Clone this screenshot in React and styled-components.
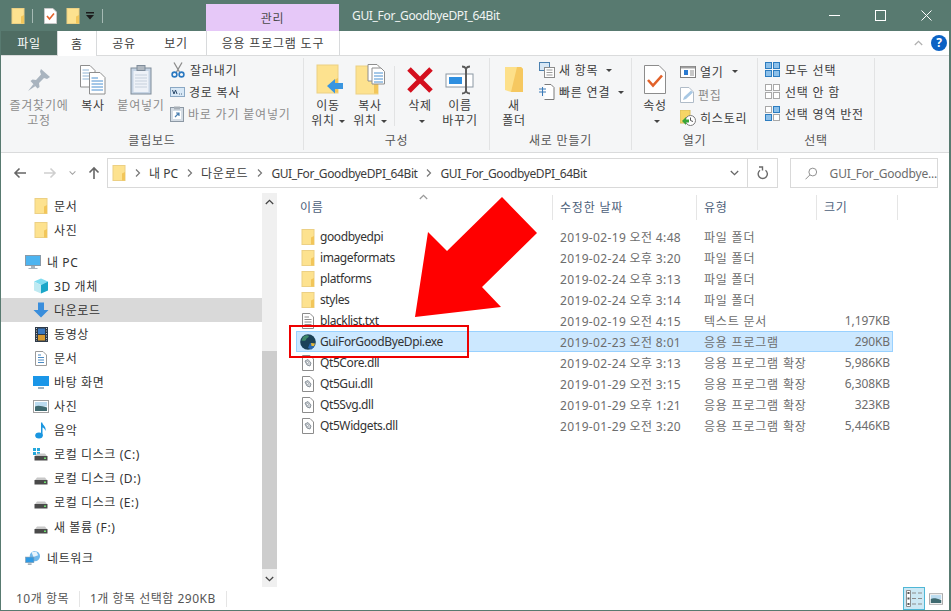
import React from 'react';
import styled, { createGlobalStyle } from 'styled-components';

const GlobalStyle = createGlobalStyle`
  html, body {
    margin: 0;
    padding: 0;
    background: #ffffff;
  }
  * {
    box-sizing: border-box;
  }
`;

const Frame = styled.div`
  position: relative;
  width: 951px;
  height: 611px;
  display: flex;
  flex-direction: column;
  overflow: hidden;
  background: #ffffff;
  border-style: solid;
  border-color: #587a70;
  border-width: 0 2px 1px 1px;
  font-family: 'Noto Sans', 'Noto Sans CJK KR', sans-serif;
  font-size: 12px;
  letter-spacing: 0.8px;
  color: #333333;
`;

const TitleBar = styled.div`
  height: 31px;
  flex: none;
  display: flex;
  background: #587a70;
`;

const QuickAccess = styled.div`
  width: 205px;
  display: flex;
  align-items: center;
  padding: 0 0 0 9px;
`;

const QuickIcon = styled.span`
  width: 16px;
  height: 18px;
  display: flex;
  align-items: center;
  justify-content: center;
  margin-right: ${p => p.$gap || 0}px;
`;

const QuickSeparator = styled.span`
  width: 1px;
  height: 14px;
  background: #a6bab4;
  margin-right: ${p => p.$gap}px;
`;

const ContextTab = styled.div`
  width: 133px;
  margin-top: 4px;
  background: #e6c8f8;
  color: #4a4a4a;
  display: flex;
  align-items: center;
  justify-content: center;
  padding-top: 1px;
`;

const WindowTitle = styled.div`
  flex: 1;
  padding-left: 13px;
  line-height: 31px;
  color: #f0f4f3;
  letter-spacing: -0.33px;
`;

const WindowButton = styled.div`
  width: 46px;
  display: flex;
  align-items: center;
  justify-content: center;
`;

const TabRow = styled.div`
  height: 24px;
  flex: none;
  display: flex;
  align-items: stretch;
  background: #ffffff;
`;

const FileTab = styled.div`
  width: 56px;
  background: #4f6d63;
  color: #ffffff;
  display: flex;
  align-items: center;
  justify-content: center;
`;

const Tab = styled.div`
  width: ${p => p.$w}px;
  display: flex;
  align-items: center;
  justify-content: center;
  color: #3c3c3c;
  background: #ffffff;
  height: ${p => (p.$active ? '25px' : 'auto')};
  position: relative;
  z-index: 1;
  border-style: solid;
  border-color: #d8dadc;
  border-width: 0 ${p => (p.$edged ? 1 : 0)}px 0 ${p => (p.$edged ? 1 : 0)}px;
  margin-left: ${p => p.$gap || 0}px;
`;

const TabSpacer = styled.div`
  flex: 1;
`;

const RibbonToggle = styled.div`
  width: 24px;
  display: flex;
  align-items: center;
  justify-content: center;
`;

const HelpBadge = styled.div`
  width: 16px;
  height: 16px;
  border-radius: 50%;
  margin: 4px 2px 0 1px;
  background: #0b62c4;
  color: #ffffff;
  font-weight: 700;
  font-size: 12px;
  letter-spacing: 0;
  line-height: 16px;
  text-align: center;
`;

const Ribbon = styled.div`
  height: 98px;
  flex: none;
  display: flex;
  padding-top: 2px;
  background: #f5f6f7;
  border-top: 1px solid #dadbdc;
  border-bottom: 1px solid #dadbdc;
`;

const Group = styled.div`
  width: ${p => p.$w}px;
  height: 92px;
  flex: none;
  display: flex;
  flex-direction: column;
  border-right: 1px solid #e2e3e4;
`;

const GroupBody = styled.div`
  height: 74px;
  display: flex;
  padding-left: ${p => p.$pad}px;
`;

const GroupCaption = styled.div`
  height: 18px;
  line-height: 17px;
  text-align: center;
  color: #555555;
`;

const BigButton = styled.div`
  width: ${p => p.$w}px;
  flex: none;
  display: flex;
  flex-direction: column;
  align-items: center;
  padding-top: 4px;
  color: ${p => (p.$off ? '#8c8c8c' : '#3c3c3c')};
  white-space: nowrap;
`;

const BigLabel = styled.div`
  line-height: 15px;
  text-align: center;
`;

const BigIcon = styled.div`
  height: 36px;
  display: flex;
  align-items: center;
  justify-content: center;
`;

const Caret = styled.span`
  display: inline-block;
  width: 0;
  height: 0;
  margin-left: 4px;
  vertical-align: 2px;
  border-left: 3px solid transparent;
  border-right: 3px solid transparent;
  border-top: 3px solid #444444;
`;

const RibbonDivider = styled.div`
  width: 1px;
  height: 60px;
  margin: 8px 3px 0 3px;
  background: #e2e3e4;
`;

const SmallStack = styled.div`
  margin-left: ${p => p.$gap || 0}px;
  padding-top: ${p => p.$top || 1}px;
  display: flex;
  flex-direction: column;
`;

const SmallRow = styled.div`
  height: ${p => p.$h || 22}px;
  display: flex;
  align-items: center;
  gap: 4px;
  white-space: nowrap;
  color: ${p => (p.$off ? '#8c8c8c' : '#3c3c3c')};
`;

const AddressRow = styled.div`
  height: 40px;
  flex: none;
  display: flex;
  align-items: center;
`;

const NavButtons = styled.div`
  width: 106px;
  display: flex;
  align-items: center;
`;

const NavButton = styled.span`
  width: ${p => p.$w}px;
  display: flex;
  justify-content: center;
`;

const AddressBox = styled.div`
  width: 671px;
  height: 30px;
  display: flex;
  align-items: center;
  border: 1px solid #d9d9d9;
  background: #ffffff;
  padding-left: 4px;
`;

const Crumb = styled.span`
  color: #3c3c3c;
  white-space: nowrap;
  letter-spacing: ${p => p.$spacing}px;
`;

const CrumbArrow = styled.span`
  width: ${p => p.$w}px;
  display: flex;
  justify-content: center;
`;

const AddressEnd = styled.div`
  margin-left: auto;
  display: flex;
  align-items: center;
  height: 100%;
`;

const RefreshButton = styled.div`
  width: 30px;
  height: 100%;
  margin-left: 8px;
  display: flex;
  align-items: center;
  justify-content: center;
  border-left: 1px solid #d9d9d9;
`;

const SearchBox = styled.div`
  width: 148px;
  height: 30px;
  margin-left: 12px;
  display: flex;
  align-items: center;
  gap: 12px;
  padding-left: 14px;
  border: 1px solid #d9d9d9;
  color: #6d6d6d;
  white-space: nowrap;
  letter-spacing: -0.2px;
`;

const Main = styled.div`
  flex: 1;
  min-height: 0;
  display: flex;
`;

const Sidebar = styled.div`
  width: 261px;
  flex: none;
  padding-top: 1px;
  letter-spacing: 0.6px;
`;

const NavRow = styled.div`
  height: 24px;
  display: flex;
  align-items: center;
  gap: ${p => (p.$root ? 6 : 5)}px;
  padding-left: ${p => (p.$root ? 24 : 32)}px;
  margin-top: ${p => p.$gap || 0}px;
  background: ${p => (p.$active ? '#d9d9d9' : 'transparent')};
  color: #333333;
`;

const NavIcon = styled.span`
  width: 16px;
  height: 16px;
  flex: none;
  display: flex;
  align-items: center;
  justify-content: center;
`;

const ScrollBar = styled.div`
  width: 15px;
  flex: none;
  display: flex;
  flex-direction: column;
  background: #f0f0f0;
`;

const ScrollArrow = styled.div`
  height: 17px;
  flex: none;
  display: flex;
  align-items: center;
  justify-content: center;
`;

const ScrollTrack = styled.div`
  flex: 1;
`;

const ScrollThumb = styled.div`
  height: 218px;
  margin-top: 141px;
  background: #cdcdcd;
`;

const FileList = styled.div`
  flex: 1;
  min-width: 0;
  padding-left: 19px;
`;

const HeaderRow = styled.div`
  width: 602px;
  height: 27px;
  margin-bottom: 6px;
  display: grid;
  grid-template-columns: 257px 144px 120px 81px;
`;

const HeaderCell = styled.div`
  position: relative;
  padding-left: ${p => p.$pad}px;
  line-height: 25px;
  color: #4c607a;
  border-right: 1px solid #e5e5e5;
  margin-top: 2px;
`;

const SortCaret = styled.span`
  position: absolute;
  top: -1px;
  left: 123px;
  line-height: 0;
`;

const FileRow = styled.div`
  width: 597px;
  height: 21px;
  display: grid;
  grid-template-columns: 257px 144px 120px 76px;
  align-items: center;
  background: ${p => (p.$selected ? '#cce8ff' : 'transparent')};
  box-shadow: ${p => (p.$selected ? 'inset 0 0 0 1px #99d1ff' : 'none')};
`;

const NameCell = styled.div`
  display: flex;
  align-items: center;
  gap: 4px;
  padding-left: 4px;
  color: #333333;
  white-space: nowrap;
  letter-spacing: -0.4px;
`;

const InfoCell = styled.div`
  padding-left: 7px;
  color: #6d6d6d;
  white-space: nowrap;
  letter-spacing: ${p => p.$spacing}px;
`;

const SizeCell = styled.div`
  padding-right: 3px;
  text-align: right;
  color: #6d6d6d;
  letter-spacing: -0.1px;
`;

const StatusBar = styled.div`
  height: 23px;
  flex: none;
  display: flex;
  align-items: center;
  color: #555555;
  letter-spacing: 0.5px;
`;

const StatusText = styled.span`
  width: ${p => p.$w}px;
  padding-left: ${p => p.$left}px;
  border-right: 1px solid #e5e5e5;
  line-height: 16px;
  white-space: nowrap;
`;

const ViewButtons = styled.div`
  margin-left: auto;
  height: 100%;
  display: flex;
  align-items: center;
  padding-right: 6px;
`;

const ViewButton = styled.div`
  width: ${p => p.$w}px;
  height: 23px;
  display: flex;
  align-items: center;
  justify-content: center;
  background: ${p => (p.$on ? '#cce8f4' : 'transparent')};
  border: ${p => (p.$on ? '1px solid #4fb7d6' : 'none')};
  margin-right: ${p => p.$gap || 0}px;
`;

const RedBox = styled.div`
  position: absolute;
  left: 288px;
  top: 325px;
  width: 180px;
  height: 33px;
  border: 2px solid #ee0000;
  pointer-events: none;
`;

const RedArrow = styled.svg`
  position: absolute;
  left: 413px;
  top: 196px;
  pointer-events: none;
`;

const FolderIcon = ({ w = 14, h = 16 }) => (
  <svg width={w} height={h} viewBox="0 0 14 16">
    <rect x="1" y="0.5" width="12" height="15" fill="#fde28f" stroke="#ecd084" />
    <path d="M10 15.5V8.5L13 7V15.5Z" fill="#f2c65a" />
  </svg>
);

const ChevronRight = ({ color = '#777777' }) => (
  <svg width="6" height="8" viewBox="0 0 6 8">
    <path d="M1 0.5L4.5 4L1 7.5" fill="none" stroke={color} strokeWidth="1.2" />
  </svg>
);

const ChevronDown = ({ color = '#666666', w = 9 }) => (
  <svg width={w} height="6" viewBox="0 0 9 6">
    <path d="M0.8 1L4.5 4.6L8.2 1" fill="none" stroke={color} strokeWidth="1.3" />
  </svg>
);

const ChevronUp = ({ color = '#555555', w = 9 }) => (
  <svg width={w} height="6" viewBox="0 0 9 6">
    <path d="M0.8 5L4.5 1.4L8.2 5" fill="none" stroke={color} strokeWidth="1.3" />
  </svg>
);

const ArrowNav = ({ dir, color }) => {
  const paths = {
    left: 'M13 7H2M6.5 2.5L2 7L6.5 11.5',
    right: 'M1 7H12M7.5 2.5L12 7L7.5 11.5',
    up: 'M7 13V2M2.5 6.5L7 2L11.5 6.5'
  };
  return (
    <svg width="14" height="14" viewBox="0 0 14 14">
      <path d={paths[dir]} fill="none" stroke={color} strokeWidth="1.6" />
    </svg>
  );
};

const CheckDocIcon = () => (
  <svg width="13" height="16" viewBox="0 0 13 16">
    <path d="M0.5 0.5H9L12.5 4V15.5H0.5Z" fill="#ffffff" stroke="#c8c8c8" />
    <path d="M3 8L5.5 11L10 5.5" fill="none" stroke="#e2622a" strokeWidth="1.6" />
  </svg>
);

const PinIcon = () => (
  <svg width="26" height="26" viewBox="0 0 26 26">
    <path d="M15 2L24 10L21 12L18 11L13 16L13.5 20L11.5 21.5L4.5 14L6.5 12.5L10 13L15 7.5L14 4.5Z" fill="#a9b4bf" />
    <path d="M7.5 17L2 24L9.5 19Z" fill="#a9b4bf" />
  </svg>
);

const CopyDocsIcon = () => (
  <svg width="26" height="30" viewBox="0 0 26 30">
    <path d="M0.5 0.5H10L15 5.5V22H0.5Z" fill="#ffffff" stroke="#8e8e8e" />
    <path d="M2.5 5H9M2.5 8H12M2.5 11H12M2.5 14H12" stroke="#8fb4d6" />
    <path d="M9.5 7.5H20L25 12.5V29H9.5Z" fill="#ffffff" stroke="#8e8e8e" />
    <path d="M11.5 13H18M11.5 16H23M11.5 19H23M11.5 22H23M11.5 25H23" stroke="#4a90d0" />
  </svg>
);

const ClipboardIcon = () => (
  <svg width="22" height="30" viewBox="0 0 22 30">
    <rect x="1" y="3" width="20" height="26" fill="#c6d4e4" stroke="#7f8c9a" />
    <rect x="3.5" y="6" width="15" height="21" fill="#eef2f8" />
    <path d="M5 10H17M5 13H17M5 16H17M5 19H17M5 22H17" stroke="#c6d0dc" />
    <rect x="7" y="0.5" width="8" height="5" fill="#b0b8c0" stroke="#7f8c9a" />
  </svg>
);

const ScissorsIcon = () => (
  <svg width="16" height="16" viewBox="0 0 16 16">
    <path d="M4 0.5L9.5 10M12 0.5L6.5 10" stroke="#8c8c8c" strokeWidth="1.3" />
    <circle cx="4.5" cy="12.5" r="2.4" fill="none" stroke="#2a78c0" strokeWidth="1.6" />
    <circle cx="11.5" cy="12.5" r="2.4" fill="none" stroke="#2a78c0" strokeWidth="1.6" />
  </svg>
);

const PathCopyIcon = () => (
  <svg width="15" height="10" viewBox="0 0 15 10">
    <rect x="0.5" y="0.5" width="14" height="9" fill="#d8e8f6" stroke="#8aa8c4" />
    <path d="M2.5 3L4 7L5.5 3L7 7M9 7H9.8M11 7H11.8" fill="none" stroke="#2c4a6a" />
  </svg>
);

const ShortcutPasteIcon = () => (
  <svg width="14" height="16" viewBox="0 0 14 16">
    <rect x="0.5" y="1.5" width="13" height="14" fill="#d4dce4" stroke="#8c98a4" />
    <rect x="4" y="0.5" width="6" height="3" fill="#a6aeb6" />
    <rect x="3" y="5" width="8" height="8" fill="#ffffff" />
    <path d="M5 11L8.5 7.5M6 7H9V10" fill="none" stroke="#4a7fb0" strokeWidth="1.2" />
  </svg>
);

const MoveToIcon = () => (
  <svg width="30" height="32" viewBox="0 0 30 32">
    <rect x="4" y="1" width="21" height="28" fill="#fde28f" stroke="#ecd084" />
    <path d="M21 28.5V16L25 14V28.5Z" fill="#f2c65a" />
    <path d="M14 22L22 15V19H30V25H22V29.5Z" fill="#3a96e0" />
  </svg>
);

const CopyToIcon = () => (
  <svg width="32" height="32" viewBox="0 0 32 32">
    <rect x="2" y="2" width="22" height="28" fill="#fde28f" stroke="#ecd084" />
    <path d="M20 29.5V16L24 14V29.5Z" fill="#f2c65a" />
    <path d="M14 0.5H23L27 4.5V17H14Z" fill="#ffffff" stroke="#8e8e8e" />
    <path d="M18 4H27L30.5 7.5V20H18Z" fill="#ffffff" stroke="#8e8e8e" />
    <path d="M20 9H29M20 12H29M20 15H29M20 18H29" stroke="#4a90d0" />
  </svg>
);

const DeleteIcon = () => (
  <svg width="26" height="26" viewBox="0 0 26 26">
    <path d="M2 2L24 24M24 2L2 24" stroke="#d40f1e" strokeWidth="5" />
  </svg>
);

const RenameIcon = () => (
  <svg width="30" height="30" viewBox="0 0 30 30">
    <rect x="1" y="9" width="27" height="13" fill="#ffffff" stroke="#8c98a4" />
    <rect x="4" y="12" width="13" height="7" fill="#2e8fe0" />
    <path d="M17 1.5C19 1.5 20 2 21 3.5C22 2 23 1.5 25 1.5M17 28.5C19 28.5 20 28 21 26.5C22 28 23 28.5 25 28.5M21 3V27" fill="none" stroke="#5c5c5c" strokeWidth="2" />
  </svg>
);

const NewFolderIcon = () => (
  <svg width="20" height="28" viewBox="0 0 20 28">
    <path d="M1 1H17L19 3V26H7L1 24Z" fill="#fde08a" />
    <path d="M13 1H17L19 3V26H7Z" fill="#f6c860" />
  </svg>
);

const NewItemIcon = () => (
  <svg width="16" height="16" viewBox="0 0 16 16">
    <rect x="0.5" y="0.5" width="10" height="8" fill="#d8e8f6" stroke="#4a80b0" />
    <rect x="5.5" y="5.5" width="10" height="10" fill="#ffffff" stroke="#8c8c8c" />
    <path d="M7.5 8H13.5M7.5 10.5H13.5M7.5 13H13.5" stroke="#9a9a9a" />
  </svg>
);

const EasyAccessIcon = () => (
  <svg width="16" height="16" viewBox="0 0 16 16">
    <path d="M5.5 0.5H12L15 3.5V15.5H5.5" fill="#ffffff" stroke="#7a7a7a" />
    <path d="M0 5H7M0 8H7M3.5 3V12" stroke="#3a7ab8" strokeWidth="1" />
  </svg>
);

const PropertiesIcon = () => (
  <svg width="22" height="30" viewBox="0 0 22 30">
    <path d="M0.5 0.5H15L21.5 7V28.5H0.5Z" fill="#ffffff" stroke="#8c8c8c" />
    <path d="M4 15L9 20.5L18 10.5" fill="none" stroke="#e2622a" strokeWidth="2.6" />
  </svg>
);

const OpenIcon = () => (
  <svg width="16" height="12" viewBox="0 0 16 12">
    <rect x="0.5" y="0.5" width="15" height="11" fill="#ffffff" stroke="#808080" />
    <path d="M1 1.5H15" stroke="#a0a0a0" strokeWidth="2" />
    <rect x="4" y="4" width="4" height="5" fill="#2a7ad0" />
    <path d="M10 5H14M10 7H14M10 9H14" stroke="#909090" />
  </svg>
);

const EditIcon = () => (
  <svg width="14" height="16" viewBox="0 0 14 16">
    <path d="M0.5 0.5H9L13.5 5V15.5H0.5Z" fill="#ffffff" stroke="#b0bcc8" />
    <path d="M3 13L4 10L11 3.5L13 5.5L6 12Z" fill="#a8c8e4" />
  </svg>
);

const HistoryIcon = () => (
  <svg width="16" height="16" viewBox="0 0 16 16">
    <rect x="0" y="0" width="10" height="13" fill="#f6d565" stroke="#d8bc5a" />
    <circle cx="10.5" cy="10.5" r="5" fill="#ffffff" stroke="#7a7a7a" />
    <path d="M10.5 7.5V10.5L13 11.5" fill="none" stroke="#555555" />
    <path d="M2 11L6 7V9.5H9V12.5H6V15Z" fill="#3aa43a" />
  </svg>
);

const SelectGridIcon = ({ cells }) => (
  <svg width="16" height="16" viewBox="0 0 16 16">
    {cells.map(([x, y, on]) => (
      <rect
        key={`${x}-${y}`}
        x={x + 0.5}
        y={y + 0.5}
        width="6"
        height="6"
        fill={on ? '#8cc0ea' : '#ffffff'}
        stroke={on ? '#2d7dc0' : '#a8a8a8'}
      />
    ))}
  </svg>
);

const PcIcon = () => (
  <svg width="16" height="15" viewBox="0 0 16 15">
    <rect x="0.5" y="0.5" width="15" height="10" fill="#4db4f0" stroke="#8a9aa8" />
    <path d="M6 11V13H3.5V14H12.5V13H10V11" fill="#a8b4be" />
  </svg>
);

const CubeIcon = () => (
  <svg width="16" height="16" viewBox="0 0 16 16">
    <path d="M8 0.5L15 3.5L8 7L1 3.5Z" fill="#7fdcf0" />
    <path d="M1 3.5L8 7V15.5L1 12.5Z" fill="#bfeaf2" />
    <path d="M15 3.5L8 7V15.5L15 12.5Z" fill="#1aa6c8" />
  </svg>
);

const DownloadIcon = () => (
  <svg width="16" height="16" viewBox="0 0 16 16">
    <path d="M5 0.5H11V8H15.5L8 15.5L0.5 8H5Z" fill="#3a8edc" />
  </svg>
);

const VideoIcon = () => (
  <svg width="13" height="15" viewBox="0 0 13 15">
    <rect x="0" y="0" width="13" height="15" fill="#2e3a48" />
    <rect x="3" y="1.5" width="7" height="5.5" fill="#3a78c0" />
    <rect x="3" y="8" width="7" height="5.5" fill="#d89a30" />
    <path d="M1.5 1V14M11.5 1V14" stroke="#c8c8c8" strokeDasharray="1 1.5" />
  </svg>
);

const DocIcon = () => (
  <svg width="12" height="15" viewBox="0 0 12 15">
    <path d="M0.5 0.5H8L11.5 4V14.5H0.5Z" fill="#ffffff" stroke="#9a9a9a" />
    <path d="M3 4H6M3 6.5H9M3 9H9M3 11.5H9" stroke="#4a8ac4" />
  </svg>
);

const DesktopIcon = () => (
  <svg width="16" height="13" viewBox="0 0 16 13">
    <rect x="0" y="0" width="16" height="10" fill="#1a96e8" />
    <path d="M5 11H11V13H5Z" fill="#9ab0c0" />
  </svg>
);

const PictureIcon = ({ w = 16, h = 13 }) => (
  <svg width={w} height={h} viewBox="0 0 16 13">
    <rect x="0.5" y="0.5" width="15" height="12" fill="#ffffff" stroke="#a0a0a0" />
    <rect x="2" y="2" width="12" height="4.5" fill="#bcdcf0" />
    <path d="M2 6.5C5 5 9 6 14 7.5V11H2Z" fill="#3f6a70" />
  </svg>
);

const MusicIcon = () => (
  <svg width="12" height="17" viewBox="0 0 12 17">
    <ellipse cx="4" cy="13.5" rx="3.8" ry="3" fill="#1a96e0" />
    <path d="M6 13V0.5H7.2C7.8 3.5 11.5 4.5 10.5 9C9.8 6.5 8.5 5.8 7.5 5.5V14Z" fill="#1a96e0" />
  </svg>
);

const DriveIcon = ({ windows }) => (
  <svg width="16" height="16" viewBox="0 0 16 16">
    {windows && <path d="M0 2H3V5H0ZM4 2H7V5H4ZM0 6H3V9H0ZM4 6H7V9H4Z" fill="#25a8dc" />}
    <path d="M2 10L4 7.5H12L14 10Z" fill="#c8c8c8" />
    <rect x="1.5" y="10" width="13" height="4.5" fill="#4a4a4a" />
    <rect x="11" y="11.5" width="2" height="1.5" fill="#6ee06e" />
  </svg>
);

const NetworkIcon = () => (
  <svg width="17" height="16" viewBox="0 0 17 16">
    <circle cx="10.5" cy="6" r="5.5" fill="#6fb8ec" />
    <path d="M7 2L12 1L14 5L9 7Z" fill="#e8f4fc" />
    <rect x="0.5" y="7" width="9" height="6" fill="#2e9ae4" stroke="#8a9aa8" strokeWidth="0.6" />
    <path d="M3 14.5H7" stroke="#8a9aa8" strokeWidth="1.4" />
  </svg>
);

const TextFileIcon = () => (
  <svg width="12" height="16" viewBox="0 0 12 16">
    <path d="M0.5 0.5H8L11.5 4V15.5H0.5Z" fill="#ffffff" stroke="#8c8c8c" />
    <path d="M2.5 4H7M2.5 6.5H9.5M2.5 9H9.5M2.5 11.5H9.5" stroke="#8c8c8c" />
  </svg>
);

const DllIcon = () => (
  <svg width="12" height="16" viewBox="0 0 12 16">
    <path d="M0.5 0.5H8L11.5 4V15.5H0.5Z" fill="#ffffff" stroke="#8c8c8c" />
    <path d="M3 6L6 4.5L9 8L8 11L5 10Z" fill="#d0d4d8" stroke="#8c949c" />
    <circle cx="5.5" cy="7.5" r="1" fill="#ffffff" stroke="#8c949c" strokeWidth="0.6" />
  </svg>
);

const ExeIcon = () => (
  <svg width="16" height="16" viewBox="0 0 16 16">
    <circle cx="8" cy="8" r="7.8" fill="#1c4258" />
    <path d="M3 3C5 1 8 1 9 2C8.5 4 6 4 6 6C5 7 3 7 1.5 6.5Z" fill="#3f8a6a" />
    <path d="M8 14L10 9L15 10L14 13L11.5 15.5Z" fill="#2a68b0" />
    <path d="M11 9L15 9.5L14 12L11.5 12Z" fill="#e6b93a" />
  </svg>
);

const SearchIcon = () => (
  <svg width="13" height="13" viewBox="0 0 13 13">
    <circle cx="8" cy="5" r="4" fill="none" stroke="#8c8c8c" />
    <path d="M5 8L0.5 12.5" stroke="#8c8c8c" />
  </svg>
);

const RefreshIcon = () => (
  <svg width="12" height="14" viewBox="0 0 12 14">
    <path d="M8.5 4.2A4.6 4.6 0 1 1 3 4.2" fill="none" stroke="#6a6a6a" strokeWidth="1.4" />
    <path d="M2 1L5.5 1V4.5" fill="none" stroke="#6a6a6a" strokeWidth="1.4" />
  </svg>
);

const DetailsViewIcon = () => (
  <svg width="16" height="17" viewBox="0 0 16 17">
    <path d="M0.5 0.5H4.5V16.5H0.5Z" fill="#ffffff" stroke="#8c8c8c" />
    <path d="M1.5 3H3.5M1.5 8.5H3.5M1.5 14H3.5" stroke="#555555" strokeWidth="2" />
    <path d="M6 3H10M12 3H16M6 8.5H10M12 8.5H16M6 14H10M12 14H16" stroke="#8c8c8c" />
  </svg>
);

const SELECT_ALL = [[0, 0, 1], [8, 0, 1], [0, 8, 1], [8, 8, 1]];
const SELECT_NONE = [[0, 0, 0], [8, 0, 0], [0, 8, 0], [8, 8, 0]];
const SELECT_INVERT = [[0, 0, 0], [8, 0, 1], [0, 8, 1], [8, 8, 0]];

const navItems = [
  { label: '문서', icon: <FolderIcon /> },
  { label: '사진', icon: <FolderIcon /> },
  { label: '내 PC', icon: <PcIcon />, root: true, gap: 8 },
  { label: '3D 개체', icon: <CubeIcon /> },
  { label: '다운로드', icon: <DownloadIcon />, active: true },
  { label: '동영상', icon: <VideoIcon /> },
  { label: '문서', icon: <DocIcon /> },
  { label: '바탕 화면', icon: <DesktopIcon /> },
  { label: '사진', icon: <PictureIcon /> },
  { label: '음악', icon: <MusicIcon /> },
  { label: '로컬 디스크 (C:)', icon: <DriveIcon windows /> },
  { label: '로컬 디스크 (D:)', icon: <DriveIcon /> },
  { label: '로컬 디스크 (E:)', icon: <DriveIcon /> },
  { label: '새 볼륨 (F:)', icon: <DriveIcon />, gap: 1 },
  { label: '네트워크', icon: <NetworkIcon />, root: true, gap: 7 }
];

const files = [
  { name: 'goodbyedpi', date: '2019-02-19 오전 4:48', type: '파일 폴더', icon: <FolderIcon /> },
  { name: 'imageformats', date: '2019-02-24 오후 3:20', type: '파일 폴더', icon: <FolderIcon /> },
  { name: 'platforms', date: '2019-02-24 오후 3:13', type: '파일 폴더', icon: <FolderIcon /> },
  { name: 'styles', date: '2019-02-24 오후 3:14', type: '파일 폴더', icon: <FolderIcon /> },
  { name: 'blacklist.txt', date: '2019-02-19 오전 4:15', type: '텍스트 문서', size: '1,197KB', icon: <TextFileIcon /> },
  { name: 'GuiForGoodByeDpi.exe', date: '2019-02-23 오전 8:01', type: '응용 프로그램', size: '290KB', icon: <ExeIcon />, selected: true },
  { name: 'Qt5Core.dll', date: '2019-02-24 오후 3:13', type: '응용 프로그램 확장', size: '5,986KB', icon: <DllIcon /> },
  { name: 'Qt5Gui.dll', date: '2019-01-29 오전 3:15', type: '응용 프로그램 확장', size: '6,308KB', icon: <DllIcon /> },
  { name: 'Qt5Svg.dll', date: '2019-01-29 오후 1:21', type: '응용 프로그램 확장', size: '323KB', icon: <DllIcon /> },
  { name: 'Qt5Widgets.dll', date: '2019-01-29 오전 3:20', type: '응용 프로그램 확장', size: '5,446KB', icon: <DllIcon /> }
];

const App = () => (
  <Frame>
    <GlobalStyle />
    <TitleBar>
      <QuickAccess>
        <QuickIcon $gap={6}><FolderIcon /></QuickIcon>
        <QuickSeparator $gap={9} />
        <QuickIcon $gap={7}><CheckDocIcon /></QuickIcon>
        <QuickIcon $gap={1}><FolderIcon /></QuickIcon>
        <QuickIcon $gap={4}>
          <svg width="8" height="8" viewBox="0 0 8 8">
            <path d="M0 0H8V1.4H0ZM0 3H8L4 7.5Z" fill="#1c1c1c" />
          </svg>
        </QuickIcon>
        <QuickSeparator $gap={0} />
      </QuickAccess>
      <ContextTab>관리</ContextTab>
      <WindowTitle>GUI_For_GoodbyeDPI_64Bit</WindowTitle>
      <WindowButton>
        <svg width="11" height="11" viewBox="0 0 11 11">
          <path d="M0 5.5H11" stroke="#ffffff" />
        </svg>
      </WindowButton>
      <WindowButton>
        <svg width="11" height="11" viewBox="0 0 11 11">
          <rect x="0.5" y="0.5" width="10" height="10" fill="none" stroke="#ffffff" />
        </svg>
      </WindowButton>
      <WindowButton>
        <svg width="11" height="11" viewBox="0 0 11 11">
          <path d="M0.5 0.5L10.5 10.5M10.5 0.5L0.5 10.5" stroke="#ffffff" />
        </svg>
      </WindowButton>
    </TitleBar>

    <TabRow>
      <FileTab>파일</FileTab>
      <Tab $w={40} $active $edged>홈</Tab>
      <Tab $w={54}>공유</Tab>
      <Tab $w={50}>보기</Tab>
      <Tab $w={134} $edged $gap={5}>응용 프로그램 도구</Tab>
      <TabSpacer />
      <RibbonToggle><ChevronUp color="#b0b0b0" w={9} /></RibbonToggle>
      <HelpBadge>?</HelpBadge>
    </TabRow>

    <Ribbon>
      <Group $w={303}>
        <GroupBody $pad={7}>
          <BigButton $w={62} $off>
            <BigIcon><PinIcon /></BigIcon>
            <BigLabel>즐겨찾기에<br />고정</BigLabel>
          </BigButton>
          <BigButton $w={46}>
            <BigIcon><CopyDocsIcon /></BigIcon>
            <BigLabel>복사</BigLabel>
          </BigButton>
          <BigButton $w={50} $off>
            <BigIcon><ClipboardIcon /></BigIcon>
            <BigLabel>붙여넣기</BigLabel>
          </BigButton>
          <SmallStack $gap={4}>
            <SmallRow><ScissorsIcon />잘라내기</SmallRow>
            <SmallRow><PathCopyIcon />경로 복사</SmallRow>
            <SmallRow $off><ShortcutPasteIcon />바로 가기 붙여넣기</SmallRow>
          </SmallStack>
        </GroupBody>
        <GroupCaption>클립보드</GroupCaption>
      </Group>

      <Group $w={186}>
        <GroupBody $pad={3}>
          <BigButton $w={42}>
            <BigIcon><MoveToIcon /></BigIcon>
            <BigLabel>이동<br />위치<Caret /></BigLabel>
          </BigButton>
          <BigButton $w={42}>
            <BigIcon><CopyToIcon /></BigIcon>
            <BigLabel>복사<br />위치<Caret /></BigLabel>
          </BigButton>
          <RibbonDivider />
          <BigButton $w={44}>
            <BigIcon><DeleteIcon /></BigIcon>
            <BigLabel>삭제<br /><Caret /></BigLabel>
          </BigButton>
          <BigButton $w={36}>
            <BigIcon><RenameIcon /></BigIcon>
            <BigLabel>이름<br />바꾸기</BigLabel>
          </BigButton>
        </GroupBody>
        <GroupCaption>구성</GroupCaption>
      </Group>

      <Group $w={142}>
        <GroupBody $pad={4}>
          <BigButton $w={40}>
            <BigIcon><NewFolderIcon /></BigIcon>
            <BigLabel>새<br />폴더</BigLabel>
          </BigButton>
          <SmallStack $gap={5}>
            <SmallRow><NewItemIcon />새 항목<Caret /></SmallRow>
            <SmallRow><EasyAccessIcon />빠른 연결<Caret /></SmallRow>
          </SmallStack>
        </GroupBody>
        <GroupCaption>새로 만들기</GroupCaption>
      </Group>

      <Group $w={126}>
        <GroupBody $pad={3}>
          <BigButton $w={40}>
            <BigIcon><PropertiesIcon /></BigIcon>
            <BigLabel>속성<br /><Caret /></BigLabel>
          </BigButton>
          <SmallStack $gap={5} $top={2}>
            <SmallRow $h={23}><OpenIcon />열기<Caret /></SmallRow>
            <SmallRow $h={23} $off><EditIcon />편집</SmallRow>
            <SmallRow $h={23}><HistoryIcon />히스토리</SmallRow>
          </SmallStack>
        </GroupBody>
        <GroupCaption>열기</GroupCaption>
      </Group>

      <Group $w={117}>
        <GroupBody $pad={7}>
          <SmallStack>
            <SmallRow><SelectGridIcon cells={SELECT_ALL} />모두 선택</SmallRow>
            <SmallRow><SelectGridIcon cells={SELECT_NONE} />선택 안 함</SmallRow>
            <SmallRow><SelectGridIcon cells={SELECT_INVERT} />선택 영역 반전</SmallRow>
          </SmallStack>
        </GroupBody>
        <GroupCaption>선택</GroupCaption>
      </Group>
    </Ribbon>

    <AddressRow>
      <NavButtons>
        <NavButton $w={12} />
        <NavButton $w={14}><ArrowNav dir="left" color="#666666" /></NavButton>
        <NavButton $w={16} />
        <NavButton $w={14}><ArrowNav dir="right" color="#cfcfcf" /></NavButton>
        <NavButton $w={30}><ChevronDown color="#a0a0a0" w={7} /></NavButton>
        <NavButton $w={14}><ArrowNav dir="up" color="#666666" /></NavButton>
      </NavButtons>
      <AddressBox>
        <FolderIcon />
        <CrumbArrow $w={23}><ChevronRight /></CrumbArrow>
        <Crumb $spacing={0}>내 PC</Crumb>
        <CrumbArrow $w={23}><ChevronRight /></CrumbArrow>
        <Crumb $spacing={0.8}>다운로드</Crumb>
        <CrumbArrow $w={23}><ChevronRight /></CrumbArrow>
        <Crumb $spacing={-0.4}>GUI_For_GoodbyeDPI_64Bit</Crumb>
        <CrumbArrow $w={23}><ChevronRight /></CrumbArrow>
        <Crumb $spacing={-0.4}>GUI_For_GoodbyeDPI_64Bit</Crumb>
        <AddressEnd>
          <ChevronDown color="#666666" />
          <RefreshButton><RefreshIcon /></RefreshButton>
        </AddressEnd>
      </AddressBox>
      <SearchBox>
        <SearchIcon />
        GUI_For_Goodbye...
      </SearchBox>
    </AddressRow>

    <Main>
      <Sidebar>
        {navItems.map((item, index) => (
          <NavRow
            key={`${item.label}-${index}`}
            $root={item.root}
            $active={item.active}
            $gap={item.gap}
          >
            <NavIcon>{item.icon}</NavIcon>
            {item.label}
          </NavRow>
        ))}
      </Sidebar>
      <ScrollBar>
        <ScrollArrow><ChevronUp color="#444444" /></ScrollArrow>
        <ScrollTrack><ScrollThumb /></ScrollTrack>
        <ScrollArrow><ChevronDown color="#444444" /></ScrollArrow>
      </ScrollBar>
      <FileList>
        <HeaderRow>
          <HeaderCell $pad={4}>
            이름
            <SortCaret>
              <ChevronUp color="#9a9a9a" w={9} />
            </SortCaret>
          </HeaderCell>
          <HeaderCell $pad={7}>수정한 날짜</HeaderCell>
          <HeaderCell $pad={7}>유형</HeaderCell>
          <HeaderCell $pad={7}>크기</HeaderCell>
        </HeaderRow>
        {files.map(file => (
          <FileRow key={file.name} $selected={file.selected}>
            <NameCell>
              <NavIcon>{file.icon}</NavIcon>
              {file.name}
            </NameCell>
            <InfoCell $spacing={0.35}>{file.date}</InfoCell>
            <InfoCell $spacing={0.8}>{file.type}</InfoCell>
            <SizeCell>{file.size}</SizeCell>
          </FileRow>
        ))}
      </FileList>
    </Main>

    <StatusBar>
      <StatusText $w={79} $left={15}>10개 항목</StatusText>
      <StatusText $w={147} $left={10}>1개 항목 선택함 290KB</StatusText>
      <ViewButtons>
        <ViewButton $w={22} $on $gap={4}><DetailsViewIcon /></ViewButton>
        <ViewButton $w={14}><PictureIcon w={14} h={12} /></ViewButton>
      </ViewButtons>
    </StatusBar>

    <RedArrow width="124" height="122" viewBox="414 196 124 122">
      <polygon points="415,317 428,232 447,251 502,197 537,233 482,287 501,307" fill="#ff0000" />
    </RedArrow>
    <RedBox />
  </Frame>
);

export default App;
